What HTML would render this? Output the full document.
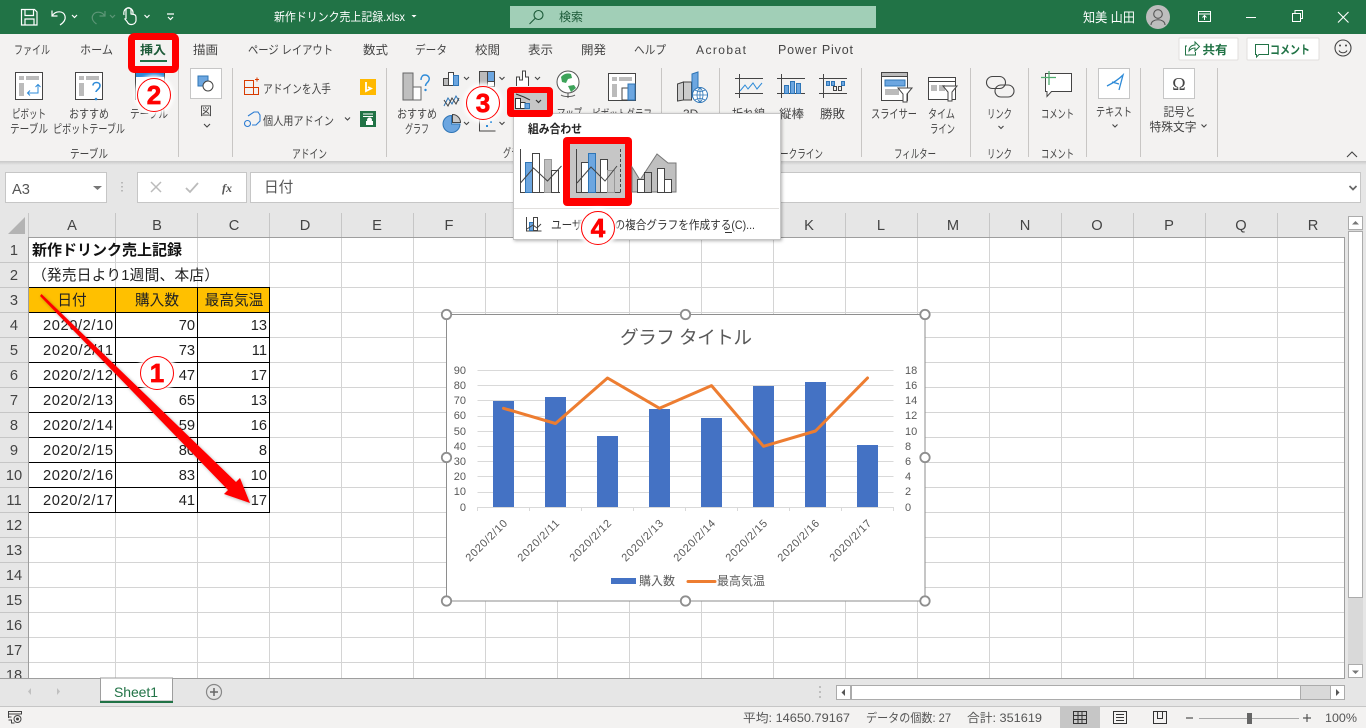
<!DOCTYPE html>
<html lang="ja"><head><meta charset="utf-8"><title>新作ドリンク売上記録.xlsx - Excel</title>
<style>
html,body{margin:0;padding:0;width:1366px;height:728px;overflow:hidden;background:#e6e6e6}
svg{display:block;font-family:"Liberation Sans","Noto Sans CJK JP",sans-serif}
text{font-size:12px;fill:#444}
.w{fill:#fff}
.c{font-size:14.67px;fill:#222}
.h{font-size:14.67px;fill:#444;text-anchor:middle}
.r{font-size:14.67px;fill:#222;text-anchor:end}
.a{font-size:11px;fill:#595959}
.e{text-anchor:end}
.m{text-anchor:middle}
.n{font-size:26px;font-weight:bold;fill:#f00;stroke:#f00;stroke-width:.7;text-anchor:middle;font-family:"Liberation Sans",sans-serif}
.ic{fill:none;stroke:#444;stroke-width:1}
.ch{fill:none;stroke:#444;stroke-width:1.1}
</style></head><body>
<svg width="1366" height="728" viewBox="0 0 1366 728" xmlns="http://www.w3.org/2000/svg">
<defs>
<linearGradient id="sh" x1="0" y1="0" x2="0" y2="1"><stop offset="0" stop-color="#c8c8c8"/><stop offset="1" stop-color="#e6e6e6"/></linearGradient>
<filter id="ds" x="-10%" y="-10%" width="120%" height="120%"><feDropShadow dx="1" dy="1" stdDeviation="1.5" flood-color="#000" flood-opacity=".3"/></filter>
<filter id="gl" x="-30%" y="-30%" width="160%" height="160%"><feGaussianBlur stdDeviation="1.5"/></filter>
</defs>
<!-- backgrounds -->
<rect width="1366" height="728" fill="#e6e6e6"/>
<rect width="1366" height="34" fill="#217346"/>
<rect y="34" width="1366" height="127" fill="#f3f2f1"/>
<rect y="161" width="1366" height="4" fill="url(#sh)"/>
<!-- title bar -->
<g fill="none" stroke="#fff" stroke-width="1.2">
<path d="M21.5 9.5h13l2.5 2.500v13h-15.500zM25 9.500v6h8.500v-6M25 25v-6h9v6"/>
<path d="M52 10.500v5.500h5.500M52.500 15.500c3-5 11-5 12.500.5 1 4-2 7-5 9"/>
<path d="M72 15l2.500 2.500 2.500-2.500"/>
<path d="M105 11v5h-5.500M104.500 15.500c-3-4.500-10-4.500-12 .5-1 3 1 6 4 8M110 15l2.500 2.500 2.500-2.500" stroke="#5d9677"/>
<path d="M126 19v-9c0-3 5-3 5 0v4l3 .500c2 .5 2 2 2 4v2c0 2-2 4-4 4h-1c-2 0-3-1-4-3l-2.500-3M124 15c-1-5 2-7 4.500-7s5 2 4.500 6"/>
<path d="M144.500 15l2.500 2.500 2.500-2.500"/>
<path d="M167 14h7M168 17l2.500 2.500 2.500-2.500"/>
</g>
<text x="274" y="21" class="w" textLength="131" lengthAdjust="spacingAndGlyphs">新作ドリンク売上記録.xlsx</text>
<path d="M411.500 15h5l-2.500 2.500z" fill="#fff"/>
<rect x="510" y="6" width="366" height="22" fill="#a1cfb7"/>
<g fill="none" stroke="#1c5a38" stroke-width="1.1"><circle cx="538.500" cy="15" r="4.500"/><path d="M535 18.500l-5.500 5.500"/></g>
<text x="559" y="21" style="fill:#1c5a38" textLength="24" lengthAdjust="spacingAndGlyphs">検索</text>
<text x="1083" y="22" class="w" style="font-size:13px" textLength="52" lengthAdjust="spacingAndGlyphs">知美 山田</text>
<circle cx="1158" cy="17" r="12" fill="#bdbdbd"/>
<g fill="none" stroke="#555" stroke-width="1.100"><circle cx="1158" cy="14" r="4.300"/><path d="M1151 25c0-7 14-7 14 0"/></g>
<g fill="none" stroke="#fff" stroke-width="1"><rect x="1198.500" y="11.500" width="12" height="10"/><path d="M1198.500 14h12M1204.500 20v-4M1202.500 17.500l2-2 2 2"/>
<path d="M1246 17.500h10"/><rect x="1292.500" y="13.500" width="8" height="8"/><path d="M1295 13v-2.500h7.500v8h-2"/><path d="M1338 12l10.500 10.500M1348.500 12l-10.500 10.500" stroke-width="1.100"/></g>
<!-- tabs -->
<g>
<text x="14" y="54" textLength="36" lengthAdjust="spacingAndGlyphs">ファイル</text>
<text x="80" y="54" textLength="33" lengthAdjust="spacingAndGlyphs">ホーム</text>
<text x="140" y="54" font-weight="bold" style="fill:#1e5c3a" textLength="26" lengthAdjust="spacingAndGlyphs">挿入</text>
<text x="193" y="54" textLength="25" lengthAdjust="spacingAndGlyphs">描画</text>
<text x="248" y="54" textLength="85" lengthAdjust="spacingAndGlyphs">ページ レイアウト</text>
<text x="363" y="54" textLength="25" lengthAdjust="spacingAndGlyphs">数式</text>
<text x="415" y="54" textLength="32" lengthAdjust="spacingAndGlyphs">データ</text>
<text x="475" y="54" textLength="25" lengthAdjust="spacingAndGlyphs">校閲</text>
<text x="528" y="54" textLength="25" lengthAdjust="spacingAndGlyphs">表示</text>
<text x="581" y="54" textLength="25" lengthAdjust="spacingAndGlyphs">開発</text>
<text x="634" y="54" textLength="32" lengthAdjust="spacingAndGlyphs">ヘルプ</text>
<text x="696" y="54" textLength="50" style="font-size:12px">Acrobat</text>
<text x="778" y="54" textLength="75" style="font-size:12.500px">Power Pivot</text>
</g>
<rect x="140" y="60" width="27" height="2" fill="#217346"/>
<rect x="1179" y="38" width="59" height="22" rx="1" fill="#fff" stroke="#e1dfdd"/>
<rect x="1247" y="38" width="72" height="22" rx="1" fill="#fff" stroke="#e1dfdd"/>
<g fill="none" stroke="#217346" stroke-width="1"><path d="M1187 46h-1.500v9h10v-3M1189 51c0-4 3-6 6-6v-3l4.500 4.500-4.500 4.500v-3c-3 0-4.500 1-6 3z"/><path d="M1255.500 44.500h13v10h-9.500l-2.500 2.500v-2.500h-1z"/></g>
<text x="1202.500" y="54" font-weight="bold" style="fill:#217346" textLength="25" lengthAdjust="spacingAndGlyphs">共有</text>
<text x="1270" y="54" font-weight="bold" style="fill:#217346" textLength="40" lengthAdjust="spacingAndGlyphs">コメント</text>
<g fill="none" stroke="#444" stroke-width="1.100"><circle cx="1343" cy="48" r="8"/><path d="M1339 50.500c1.500 3 6.500 3 8 0"/></g>
<circle cx="1340" cy="45.500" r="1" fill="#444"/><circle cx="1346" cy="45.500" r="1" fill="#444"/>
<!-- group separators -->
<path d="M178.500 68v89M232.500 68v89M386.500 68v89M661.500 68v89M719.500 68v89M861.500 68v89M970.500 68v89M1028.500 68v89M1086.500 68v89M1140.500 68v89M1217.500 68v89" stroke="#c8c6c4" fill="none"/>
<!-- pivot icons -->
<g class="ic">
<rect x="15.500" y="72.500" width="27" height="27" fill="#fff" stroke="#444"/>
<rect x="19" y="76" width="5" height="4" fill="#bbb" stroke="none"/><rect x="26" y="76" width="13" height="4" fill="#bbb" stroke="none"/><rect x="19" y="83" width="5" height="13" fill="#bbb" stroke="none"/>
<path d="M28 93h10v-8M35.500 87l2.500-2.500 2.500 2.500M30 90.500L27.500 93l2.500 2.500" stroke="#2e8bd8"/>
<rect x="75.500" y="72.500" width="27" height="27" fill="#fff" stroke="#444"/>
<rect x="79" y="76" width="5" height="4" fill="#bbb" stroke="none"/><rect x="86" y="76" width="13" height="4" fill="#bbb" stroke="none"/><rect x="79" y="83" width="5" height="13" fill="#bbb" stroke="none"/>
<path d="M96 92c0-2 4-3 4-6.500 0-4-7-4-7 0" stroke="#2e8bd8" stroke-width="1.600"/>
<path d="M135.500 100v-28h29v28" fill="#fff"/>
<rect x="136" y="72" width="28" height="5" fill="#2e8bd8" stroke="none"/>
</g>
<circle cx="96" cy="99" r="1.300" fill="#2e8bd8"/>
<text x="12" y="118" textLength="34" lengthAdjust="spacingAndGlyphs">ピボット</text>
<text x="10" y="133" textLength="38" lengthAdjust="spacingAndGlyphs">テーブル</text>
<text x="69" y="118" textLength="40" lengthAdjust="spacingAndGlyphs">おすすめ</text>
<text x="53" y="133" textLength="72" lengthAdjust="spacingAndGlyphs">ピボットテーブル</text>
<text x="130" y="118" textLength="38" lengthAdjust="spacingAndGlyphs">テーブル</text>
<text x="70" y="158" textLength="38" lengthAdjust="spacingAndGlyphs">テーブル</text>
<!-- pictures -->
<rect x="190.500" y="68.500" width="31" height="30" fill="#fff" stroke="#c6c6c6"/>
<rect x="198" y="76" width="10" height="10" fill="#6ca6e0" stroke="#2e75b6"/>
<circle cx="208" cy="86" r="5" fill="#fff" stroke="#444"/>
<text x="200" y="115">図</text>
<path class="ch" d="M204 124l3 3 3-3"/>
<!-- add-in -->
<g fill="none" stroke="#d83b01" stroke-width="1"><path d="M244.500 80.500h9v14h-9zM244.500 87.500h14v7h-5M253.500 80.500v14M255 79.500h4M257 77.500v4"/></g>
<text x="263" y="93" textLength="68" lengthAdjust="spacingAndGlyphs">アドインを入手</text>
<rect x="360" y="79" width="16" height="16" fill="#ffb900"/>
<path d="M366 82v9l5-2.500-3-1.500" fill="none" stroke="#fff" stroke-width="1.800"/>
<g fill="none" stroke="#2b7cd3" stroke-width="1.100"><path d="M248 116l6-4h4l2 3v6l-4 4h-4M244 122"/><circle cx="247.500" cy="123.500" r="3"/></g>
<text x="263" y="125" textLength="71" lengthAdjust="spacingAndGlyphs">個人用アドイン</text>
<path class="ch" d="M345 117.500l2.500 2.500 2.500-2.500"/>
<rect x="360" y="111" width="16" height="16" fill="#217346"/>
<path d="M363 114h10M363 116.500h10" stroke="#fff"/><circle cx="369.500" cy="120" r="2.500" fill="#fff"/><rect x="366" y="121" width="7" height="4" fill="#fff"/>
<text x="292" y="158" textLength="35" lengthAdjust="spacingAndGlyphs">アドイン</text>
<!-- chart group -->
<rect x="403" y="73" width="10" height="27" fill="#bfbfbf" stroke="#666"/><rect x="413" y="87" width="8" height="13" fill="#fff" stroke="#666"/>
<path d="M421 80c0-3 1.500-5 4-5s5 2 4 5-3.500 3-3.500 6" fill="none" stroke="#2e8bd8" stroke-width="1.400"/><circle cx="425.500" cy="90" r="1.200" fill="#2e8bd8"/>
<text x="397" y="118" textLength="40" lengthAdjust="spacingAndGlyphs">おすすめ</text>
<text x="405" y="133" textLength="24" lengthAdjust="spacingAndGlyphs">グラフ</text>
<!-- mini icons -->
<g stroke="#444" stroke-width="1">
<rect x="443.500" y="78.500" width="5" height="7" fill="#bbb"/><rect x="448.500" y="72.500" width="5" height="13" fill="#fff"/><rect x="453.500" y="75.500" width="5" height="10" fill="#6ca6e0" stroke="#2e75b6"/>
<rect x="479.500" y="71.500" width="15" height="15" fill="#fff"/><rect x="487.500" y="71.500" width="7" height="10" fill="#6ca6e0" stroke="#444"/><rect x="479.500" y="71.500" width="8" height="15" fill="#bbb"/>
<path d="M516.500 86v-9h3v3h3v-9h3v6h3v9" fill="#fff"/>
<path d="M444 106l4-8 4 6 4-8 3 5" fill="none" stroke="#2e75b6"/><path d="M444 100l4 6 4-8 4 6 3-6" fill="none"/>
<path d="M451.500 115.500a8.500 8.500 0 1 0 8.500 8.500h-8.500z" fill="#6ca6e0" stroke="#2e75b6"/><path d="M452.500 114.500v8h8a8 8 0 0 0-8-8z" fill="#ccc"/>
<path d="M479.500 118v13h16" fill="none"/>
</g>
<rect x="486" y="125" width="2" height="2" fill="#2e8bd8"/><rect x="490" y="121" width="2" height="2" fill="#2e8bd8"/>
<path class="ch" d="M464 77l2.500 2.500L469 77M499.500 77l2.500 2.500 2.500-2.500M535 77l2.500 2.500L540 77M464 122l2.500 2.500L469 122M499.500 122l2.500 2.500 2.500-2.500"/>
<text x="503" y="157" textLength="24" lengthAdjust="spacingAndGlyphs">グラフ</text>
<!-- map -->
<circle cx="568" cy="82" r="11" fill="#fff" stroke="#555"/>
<path d="M561 77c3-4 8-4 10-3l1 4-4 1-2 4-4-1zM568 86l6-1 2 3-5 4z" fill="#3ea35a"/>
<path d="M561 95c3 2 11 2 14 0M568 93v5" fill="none" stroke="#555"/>
<text x="557" y="117" textLength="25" lengthAdjust="spacingAndGlyphs">マップ</text>
<!-- pivot chart -->
<rect x="608.500" y="73.500" width="27" height="27" fill="#fff" stroke="#444"/>
<rect x="612" y="77" width="5" height="4" fill="#bbb"/><rect x="619" y="77" width="13" height="4" fill="#bbb"/><rect x="612" y="84" width="5" height="13" fill="#bbb"/>
<rect x="622" y="88" width="6" height="12" fill="#fff" stroke="#444"/><rect x="628" y="84" width="7" height="16" fill="#6ca6e0" stroke="#2e75b6"/>
<text x="592" y="118" textLength="60" lengthAdjust="spacingAndGlyphs">ピボットグラフ</text>
<!-- 3D map -->
<path d="M677.500 84l6-2v18l-6 1zM683.500 82l8 0v18h-8z" fill="#ccc" stroke="#444"/>
<path d="M692 74l6-2v25h-6z" fill="#6ca6e0" stroke="#2e75b6"/>
<circle cx="700" cy="95" r="7.500" fill="#fff" stroke="#2e75b6"/>
<path d="M692.500 95h15M700 87.500v15M695 90c3 2 7 2 10 0M695 100c3-2 7-2 10 0M700 87.500c-4 4-4 11 0 15M700 87.500c4 4 4 11 0 15" fill="none" stroke="#2e75b6" stroke-width=".8"/>
<text x="683" y="118">3D</text>
<!-- sparklines -->
<g fill="none" stroke="#444"><path d="M735 78.500h28M735 93.500h28M739.500 74v24M777 78.500h28M777 93.500h28M781.500 74v24M819 78.500h28M819 93.500h28M823.500 74v24"/>
<path d="M740 91l5-6 3 4 5-6 4 6 5-6" stroke="#2e8bd8"/>
<g fill="#6ca6e0" stroke="#2e75b6"><rect x="784.500" y="85.500" width="4" height="8"/><rect x="790.500" y="81.500" width="4" height="12"/><rect x="796.500" y="83.500" width="4" height="10"/><rect x="826.500" y="81.500" width="3" height="4"/><rect x="831.500" y="81.500" width="3" height="4"/><rect x="841.500" y="81.500" width="3" height="4"/></g>
<rect x="833.500" y="86.500" width="3" height="4"/><rect x="838.500" y="86.500" width="3" height="4"/></g>
<text x="732" y="118" textLength="33" lengthAdjust="spacingAndGlyphs">折れ線</text>
<text x="779" y="118" textLength="25" lengthAdjust="spacingAndGlyphs">縦棒</text>
<text x="820" y="118" textLength="25" lengthAdjust="spacingAndGlyphs">勝敗</text>
<text x="780" y="158" textLength="43" lengthAdjust="spacingAndGlyphs">ークライン</text>
<!-- filter -->
<rect x="881.500" y="72.500" width="26" height="28" fill="#fff" stroke="#444"/><rect x="881.500" y="72.500" width="26" height="4" fill="#bbb" stroke="#444"/>
<rect x="885" y="80" width="20" height="6" fill="#6ca6e0" stroke="#2e75b6"/><rect x="885" y="89" width="14" height="6" fill="#bbb"/>
<path d="M898 88h14l-5 6v8h-4v-8z" fill="#fff" stroke="#444"/>
<rect x="928.500" y="77.500" width="27" height="22" fill="#fff" stroke="#444"/><path d="M928.500 81.500h27" stroke="#444"/>
<rect x="931" y="85" width="6" height="6" fill="#bbb"/><rect x="939" y="85" width="6" height="6" fill="#bbb"/>
<path d="M943 86h14l-5 6v9h-4v-9z" fill="#fff" stroke="#444"/>
<text x="871" y="118" textLength="46" lengthAdjust="spacingAndGlyphs">スライサー</text>
<text x="928" y="118" textLength="27" lengthAdjust="spacingAndGlyphs">タイム</text>
<text x="930" y="133" textLength="25" lengthAdjust="spacingAndGlyphs">ライン</text>
<text x="894" y="158" textLength="42" lengthAdjust="spacingAndGlyphs">フィルター</text>
<!-- link -->
<g fill="none" stroke="#444" stroke-width="1.100"><rect x="986.500" y="76.500" width="19" height="12" rx="6"/><rect x="995" y="85" width="19" height="12" rx="6"/></g>
<text x="987" y="118" textLength="25" lengthAdjust="spacingAndGlyphs">リンク</text>
<path class="ch" d="M998.500 126l2.500 2.500 2.500-2.500"/>
<text x="987" y="158" textLength="25" lengthAdjust="spacingAndGlyphs">リンク</text>
<!-- comment -->
<path d="M1045.500 73.500h26v18h-20l-4.500 5v-5h-1.500z" fill="#fff" stroke="#444"/>
<path d="M1041 77.500h15M1049 71v14" stroke="#4eac6d" stroke-width="1.300"/>
<text x="1041" y="118" textLength="33" lengthAdjust="spacingAndGlyphs">コメント</text>
<text x="1041" y="158" textLength="33" lengthAdjust="spacingAndGlyphs">コメント</text>
<!-- text -->
<rect x="1098.500" y="68.500" width="31" height="30" fill="#fff" stroke="#c6c6c6"/>
<path d="M1107 86c6-3 12-7 16-11l-4 15M1112 82l7 2" fill="none" stroke="#2e8bd8" stroke-width="1.300"/>
<text x="1096" y="116" textLength="36" lengthAdjust="spacingAndGlyphs">テキスト</text>
<path class="ch" d="M1112.500 124.500l2.500 2.500 2.500-2.500"/>
<rect x="1163.500" y="68.500" width="31" height="30" fill="#fff" stroke="#c6c6c6"/>
<text x="1179" y="90" class="m" style="font-size:18px;font-family:'Liberation Serif',serif">Ω</text>
<text x="1163.500" y="116" textLength="32" lengthAdjust="spacingAndGlyphs">記号と</text>
<text x="1149.500" y="131" textLength="47" lengthAdjust="spacingAndGlyphs">特殊文字</text>
<path class="ch" d="M1201.500 124.500l2.500 2.500 2.500-2.500"/>
<path d="M1347 157l5-5 5 5" fill="none" stroke="#444" stroke-width="1.100"/>
<!-- formula bar -->
<rect x="5.500" y="172.500" width="101" height="30" fill="#fff" stroke="#c6c6c6"/>
<text x="12" y="194" style="font-size:14.670px;fill:#555">A3</text>
<path d="M93 186h9l-4.500 4z" fill="#777"/>
<path d="M122 182v1.500M122 186v1.500M122 190v1.500" stroke="#aaa" stroke-width="1.500"/>
<rect x="137.500" y="172.500" width="109" height="30" fill="#fff" stroke="#c6c6c6"/>
<path d="M151 182l10 10M161 182l-10 10" stroke="#bbb" stroke-width="1.500"/>
<path d="M186 188l4 4 8-9" stroke="#bbb" stroke-width="1.800" fill="none"/>
<text x="222" y="192" style="font-size:12px;font-style:italic;font-weight:bold;fill:#555;font-family:'Liberation Serif',serif">fx</text>
<rect x="250.500" y="172.500" width="1110" height="30" fill="#fff" stroke="#c6c6c6"/>
<text x="264" y="192" style="font-size:14.670px;fill:#555">日付</text>
<path d="M1349.500 186l3.500 3.500 3.500-3.500" fill="none" stroke="#666" stroke-width="1.700"/>
<!-- sheet -->
<rect x="29" y="238" width="1316" height="440" fill="#fff"/>
<g stroke="#d4d4d4" fill="none">
<path d="M115.500 238v440M197.500 238v440M269.500 238v440M341.500 238v440M413.500 238v440M485.500 238v440M557.500 238v440M629.500 238v440M701.500 238v440M773.500 238v440M845.500 238v440M917.500 238v440M989.500 238v440M1061.500 238v440M1133.500 238v440M1205.500 238v440M1277.500 238v440"/>
<path d="M29 262.500h1316M29 287.500h1316M29 312.500h1316M29 337.500h1316M29 362.500h1316M29 387.500h1316M29 412.500h1316M29 437.500h1316M29 462.500h1316M29 487.500h1316M29 512.500h1316M29 537.500h1316M29 562.500h1316M29 587.500h1316M29 612.500h1316M29 637.500h1316M29 662.500h1316"/>
</g>
<!-- headers -->
<rect x="0" y="212" width="1346" height="25" fill="#e6e6e6"/>
<rect x="0" y="212" width="28" height="466" fill="#e6e6e6"/>
<path d="M25 217v17H8z" fill="#b3b3b3"/>
<g stroke="#c6c6c6" fill="none">
<path d="M28.500 213v24M115.500 213v24M197.500 213v24M269.500 213v24M341.500 213v24M413.500 213v24M485.500 213v24M557.500 213v24M629.500 213v24M701.500 213v24M773.500 213v24M845.500 213v24M917.500 213v24M989.500 213v24M1061.500 213v24M1133.500 213v24M1205.500 213v24M1277.500 213v24"/>
<path d="M0 262.500h28M0 287.500h28M0 312.500h28M0 337.500h28M0 362.500h28M0 387.500h28M0 412.500h28M0 437.500h28M0 462.500h28M0 487.500h28M0 512.500h28M0 537.500h28M0 562.500h28M0 587.500h28M0 612.500h28M0 637.500h28M0 662.500h28"/>
</g>
<path d="M29 237.500h1316M28.500 237v441M1344.500 237v441" stroke="#9e9e9e" fill="none"/>
<g>
<text class="h" x="72" y="230">A</text><text class="h" x="157" y="230">B</text><text class="h" x="234" y="230">C</text><text class="h" x="305" y="230">D</text><text class="h" x="377" y="230">E</text><text class="h" x="449" y="230">F</text><text class="h" x="521" y="230">G</text><text class="h" x="593" y="230">H</text><text class="h" x="665" y="230">I</text><text class="h" x="737" y="230">J</text><text class="h" x="809" y="230">K</text><text class="h" x="881" y="230">L</text><text class="h" x="953" y="230">M</text><text class="h" x="1025" y="230">N</text><text class="h" x="1097" y="230">O</text><text class="h" x="1169" y="230">P</text><text class="h" x="1241" y="230">Q</text><text class="h" x="1313" y="230">R</text>
<text class="h" x="14" y="255">1</text><text class="h" x="14" y="280">2</text><text class="h" x="14" y="305">3</text><text class="h" x="14" y="330">4</text><text class="h" x="14" y="355">5</text><text class="h" x="14" y="380">6</text><text class="h" x="14" y="405">7</text><text class="h" x="14" y="430">8</text><text class="h" x="14" y="455">9</text><text class="h" x="14" y="480">10</text><text class="h" x="14" y="505">11</text><text class="h" x="14" y="530">12</text><text class="h" x="14" y="555">13</text><text class="h" x="14" y="580">14</text><text class="h" x="14" y="605">15</text><text class="h" x="14" y="630">16</text><text class="h" x="14" y="655">17</text><text class="h" x="14" y="680">18</text>
</g>
<rect x="0" y="678" width="1366" height="29" fill="#e6e6e6"/>
<!-- cells -->
<rect x="29" y="288" width="241" height="25" fill="#ffc000"/>
<path d="M29 287.500h241M29 312.500h241M29 337.500h241M29 362.500h241M29 387.500h241M29 412.500h241M29 437.500h241M29 462.500h241M29 487.500h241M29 512.500h241M115.500 287v226M197.500 287v226M269.500 287v226" stroke="#000" fill="none"/>
<text class="c" x="32" y="255" font-weight="bold" style="font-size:15px;fill:#111">新作ドリンク売上記録</text>
<text class="c" x="32" y="280" textLength="187">（発売日より1週間、本店）</text>
<text class="h" x="72" y="305" style="fill:#222">日付</text><text class="h" x="157" y="305" style="fill:#222">購入数</text><text class="h" x="234" y="305" style="fill:#222">最高気温</text>
<g>
<text class="c" x="43" y="330" textLength="70">2020/2/10</text><text class="r" x="195" y="330">70</text><text class="r" x="267" y="330">13</text>
<text class="c" x="43" y="355" textLength="70">2020/2/11</text><text class="r" x="195" y="355">73</text><text class="r" x="267" y="355">11</text>
<text class="c" x="43" y="380" textLength="70">2020/2/12</text><text class="r" x="195" y="380">47</text><text class="r" x="267" y="380">17</text>
<text class="c" x="43" y="405" textLength="70">2020/2/13</text><text class="r" x="195" y="405">65</text><text class="r" x="267" y="405">13</text>
<text class="c" x="43" y="430" textLength="70">2020/2/14</text><text class="r" x="195" y="430">59</text><text class="r" x="267" y="430">16</text>
<text class="c" x="43" y="455" textLength="70">2020/2/15</text><text class="r" x="195" y="455">80</text><text class="r" x="267" y="455">8</text>
<text class="c" x="43" y="480" textLength="70">2020/2/16</text><text class="r" x="195" y="480">83</text><text class="r" x="267" y="480">10</text>
<text class="c" x="43" y="505" textLength="70">2020/2/17</text><text class="r" x="195" y="505">41</text><text class="r" x="267" y="505">17</text>
</g>
<!-- chart -->
<rect x="446.500" y="314.500" width="478.500" height="286.500" fill="#fff" stroke="#8e8e8e"/>
<text x="620" y="344" style="font-size:18.670px;fill:#595959" textLength="132">グラフ タイトル</text>
<path d="M477.500 370.500h416M477.500 385.500h416M477.500 400.500h416M477.500 416.500h416M477.500 431.500h416M477.500 446.500h416M477.500 461.500h416M477.500 476.500h416M477.500 492.500h416" stroke="#d9d9d9" fill="none"/>
<g fill="#4472c4">
<rect x="493" y="401" width="21" height="106"/><rect x="545" y="397" width="21" height="110"/><rect x="597" y="436" width="21" height="71"/><rect x="649" y="409" width="21" height="98"/><rect x="701" y="418" width="21" height="89"/><rect x="753" y="386" width="21" height="121"/><rect x="805" y="382" width="21" height="125"/><rect x="857" y="445" width="21" height="62"/>
</g>
<path d="M477.500 507.500h416M477.500 507v4M529.500 507v4M581.500 507v4M633.500 507v4M685.500 507v4M737.500 507v4M789.500 507v4M841.500 507v4M893.500 507v4" stroke="#d9d9d9" fill="none"/>
<path d="M503.500 408.300L555.500 423.500 607.500 378 659.500 408.300 711.500 385.600 763.500 446.300 815.500 431 867.500 378" fill="none" stroke="#ed7d31" stroke-width="3" stroke-linecap="round" stroke-linejoin="round"/>
<g class="a">
<text class="a e" x="466" y="374">90</text><text class="a e" x="466" y="389">80</text><text class="a e" x="466" y="404">70</text><text class="a e" x="466" y="419">60</text><text class="a e" x="466" y="435">50</text><text class="a e" x="466" y="450">40</text><text class="a e" x="466" y="465">30</text><text class="a e" x="466" y="480">20</text><text class="a e" x="466" y="495">10</text><text class="a e" x="466" y="511">0</text>
<text class="a" x="905" y="374">18</text><text class="a" x="905" y="389">16</text><text class="a" x="905" y="404">14</text><text class="a" x="905" y="419">12</text><text class="a" x="905" y="435">10</text><text class="a" x="905" y="450">8</text><text class="a" x="905" y="465">6</text><text class="a" x="905" y="480">4</text><text class="a" x="905" y="495">2</text><text class="a" x="905" y="511">0</text>
<text class="a e" transform="rotate(-45 508 524)" x="508" y="524" textLength="54">2020/2/10</text>
<text class="a e" transform="rotate(-45 560 524)" x="560" y="524" textLength="54">2020/2/11</text>
<text class="a e" transform="rotate(-45 612 524)" x="612" y="524" textLength="54">2020/2/12</text>
<text class="a e" transform="rotate(-45 664 524)" x="664" y="524" textLength="54">2020/2/13</text>
<text class="a e" transform="rotate(-45 716 524)" x="716" y="524" textLength="54">2020/2/14</text>
<text class="a e" transform="rotate(-45 768 524)" x="768" y="524" textLength="54">2020/2/15</text>
<text class="a e" transform="rotate(-45 820 524)" x="820" y="524" textLength="54">2020/2/16</text>
<text class="a e" transform="rotate(-45 872 524)" x="872" y="524" textLength="54">2020/2/17</text>
</g>
<rect x="611" y="578" width="25" height="6" fill="#4472c4"/>
<text x="639" y="585" style="fill:#595959;font-size:12px">購入数</text>
<path d="M688 581.500h27" stroke="#ed7d31" stroke-width="3" stroke-linecap="round"/>
<text x="717" y="585" style="fill:#595959;font-size:12px">最高気温</text>
<g fill="#fff" stroke="#8e8e8e" stroke-width="1.800">
<circle cx="446.500" cy="314.500" r="4.700"/><circle cx="685.500" cy="314.500" r="4.700"/><circle cx="925" cy="314.500" r="4.700"/><circle cx="446.500" cy="457.500" r="4.700"/><circle cx="925" cy="457.500" r="4.700"/><circle cx="446.500" cy="601" r="4.700"/><circle cx="685.500" cy="601" r="4.700"/><circle cx="925" cy="601" r="4.700"/>
</g>
<!-- vertical scrollbar -->
<rect x="1348" y="216" width="15" height="462" fill="#d9d9d9"/>
<rect x="1348.500" y="216.500" width="14" height="13" fill="#fff" stroke="#ababab"/>
<path d="M1352 224.500h7l-3.500-3.500z" fill="#777"/>
<rect x="1348.500" y="231.500" width="14" height="366" fill="#fff" stroke="#ababab"/>
<rect x="1348.500" y="664.500" width="14" height="13" fill="#fff" stroke="#ababab"/>
<path d="M1352 670.500h7l-3.500 3.500z" fill="#777"/>
<!-- sheet tabs -->
<path d="M0 678.500h1345" stroke="#9e9e9e"/>
<path d="M31 688l-3 3.500 3 3.500zM57 688l3 3.500-3 3.500z" fill="#c0c0c0"/>
<rect x="100.500" y="678" width="72" height="23" fill="#fff" stroke="#9e9e9e"/>
<rect x="100" y="701" width="73" height="2" fill="#217346"/>
<text x="114" y="697" style="font-size:14px;fill:#217346" textLength="44">Sheet1</text>
<circle cx="214" cy="692" r="7.500" fill="none" stroke="#888" stroke-width="1.200"/><path d="M214 688v8M210 692h8" stroke="#666" stroke-width="1.500"/>
<path d="M820 686v2M820 691v2M820 696v2" stroke="#b0b0b0" stroke-width="1.500"/>
<rect x="836.500" y="685.500" width="508" height="14" fill="#d9d9d9" stroke="#ababab"/>
<rect x="836.500" y="685.500" width="14" height="14" fill="#fff" stroke="#ababab"/>
<path d="M845 689v7l-3.500-3.500z" fill="#555"/>
<rect x="851.500" y="685.500" width="449" height="14" fill="#fff" stroke="#ababab"/>
<rect x="1330.500" y="685.500" width="14" height="14" fill="#fff" stroke="#ababab"/>
<path d="M1336 689v7l3.500-3.500z" fill="#555"/>
<!-- status bar -->
<rect y="706" width="1366" height="22" fill="#f3f2f1"/>
<path d="M0 706.500h1366" stroke="#c6c6c6"/>
<g fill="none" stroke="#444"><path d="M8.500 718v-6.500h13v3M8.500 714h13M8.500 717h3M8.500 720h3v3h3"/><circle cx="17.500" cy="719" r="3.500"/></g>
<circle cx="17.500" cy="719" r="1.500" fill="#444"/>
<text x="743" y="722" textLength="107" lengthAdjust="spacingAndGlyphs" style="fill:#555">平均: 14650.79167</text>
<text x="866" y="722" textLength="85" lengthAdjust="spacingAndGlyphs" style="fill:#555">データの個数: 27</text>
<text x="967" y="722" textLength="75" lengthAdjust="spacingAndGlyphs" style="fill:#555">合計: 351619</text>
<rect x="1060" y="707" width="40" height="21" fill="#c6c6c6"/>
<g fill="none" stroke="#333"><path d="M1073.500 711.500h13v12h-13zM1078 711.500v12M1082 711.500v12M1073.500 715.500h13M1073.500 719.500h13"/>
<path d="M1113.500 711.500h13v12h-13zM1116 714.500h8M1116 717.500h8M1116 720.500h8"/>
<path d="M1153.500 711.500h13v12h-13zM1157.500 711.500v7h5v-7"/></g>
<path d="M1186 718h7M1303 718h8M1307 714v8" stroke="#555" stroke-width="1.200"/>
<path d="M1199 718.500h100" stroke="#a8a8a8"/><rect x="1247" y="713" width="5" height="11" fill="#666"/>
<text x="1325" y="722" textLength="32" lengthAdjust="spacingAndGlyphs" style="fill:#555">100%</text>
<!-- arrow -->
<polygon points="40,296 41.500,294 236,482 240,478 250,503 224,494 228,490" fill="#f00" filter="url(#ds)"/>
<!-- dropdown -->
<rect x="513.500" y="113.500" width="267" height="126" fill="#fff" stroke="#c6c6c6" filter="url(#ds)"/>
<text x="528" y="133" font-weight="bold" style="fill:#262626" textLength="54" lengthAdjust="spacingAndGlyphs">組み合わせ</text>
<g stroke="#444" fill="none">
<path d="M520.500 149v43.500H560"/>
<rect x="525.500" y="162.500" width="7" height="30" fill="#6ca6e0" stroke="#2e75b6"/><rect x="532.500" y="153.500" width="7" height="39" fill="#fff"/><rect x="544.500" y="159.500" width="7" height="33" fill="#bfbfbf" stroke="#999"/><rect x="551.500" y="170.500" width="7" height="22" fill="#fff"/>
<path d="M520.500 183l13-15 14 13 14-15"/>
</g>
<rect x="563" y="137" width="69" height="69" rx="4" fill="#f00"/>
<rect x="570" y="144" width="55" height="54" fill="#c6c6c6"/>
<g stroke="#444" fill="none">
<path d="M576.500 149v43.500h44"/><path d="M620.500 149v43" stroke-dasharray="3 2"/>
<rect x="581.500" y="162.500" width="7" height="30" fill="#fff"/><rect x="588.500" y="153.500" width="7" height="39" fill="#6ca6e0" stroke="#2e75b6"/><rect x="600.500" y="159.500" width="7" height="33" fill="#fff"/><rect x="607.500" y="170.500" width="7" height="22" fill="#c6c6c6" stroke="#999"/>
<path d="M577 183l14-16 14 14 12-15"/>
<path d="M632 167l8 13 17-26 11 9h8v29h-44z" fill="#bfbfbf" stroke="#777"/>
<rect x="637.500" y="179.500" width="7" height="13" fill="#fff"/><rect x="644.500" y="172.500" width="7" height="20" fill="#bfbfbf"/><rect x="657.500" y="168.500" width="7" height="24" fill="#fff"/><rect x="664.500" y="179.500" width="7" height="13" fill="#fff"/>
</g>
<path d="M514 208.500h265" stroke="#e1dfdd"/>
<g fill="none" stroke="#444"><path d="M526.500 217v14h15"/><rect x="529.500" y="222.500" width="4" height="8" fill="#6ca6e0" stroke="#2e75b6"/><rect x="533.500" y="217.500" width="4" height="13" fill="#fff"/><path d="M527 229l6-4 4 3 4-4"/></g>
<text x="551" y="229" textLength="204" lengthAdjust="spacingAndGlyphs" style="fill:#333">ユーザー設定の複合グラフを作成する(C)...</text>
<path d="M725 232.500h7" stroke="#333"/>
<!-- combo button highlight -->
<rect x="507" y="87" width="46" height="30" rx="4" fill="#f00"/>
<rect x="514" y="93" width="33" height="17" fill="#c6c6c6"/>
<g stroke="#333" fill="none"><path d="M516 94l8 3 6 3"/><rect x="515.500" y="98.500" width="5" height="10" fill="#fff"/><rect x="520.500" y="102.500" width="4.500" height="6" fill="#fff"/><rect x="525" y="103.500" width="4.500" height="5" fill="#6ca6e0" stroke="#2e75b6"/><path d="M536 100l2.500 2.500 2.500-2.500" stroke-width="1.200"/></g>
<!-- insert tab highlight -->
<rect x="131.500" y="36.500" width="44" height="33" rx="3" fill="none" stroke="#f00" stroke-width="7"/>
<!-- numbered badges -->
<g>
<circle cx="157" cy="373" r="20" fill="#fff" opacity=".9" filter="url(#gl)"/><circle cx="157" cy="373" r="17" fill="#fff"/><circle cx="157" cy="373" r="16.500" fill="none" stroke="#f00"/><text class="n" x="157" y="382">1</text>
<circle cx="154" cy="95" r="20" fill="#fff" opacity=".9" filter="url(#gl)"/><circle cx="154" cy="95" r="17" fill="#fff"/><circle cx="154" cy="95" r="16.500" fill="none" stroke="#f00"/><text class="n" x="154" y="104">2</text>
<circle cx="483" cy="103" r="20" fill="#fff" opacity=".9" filter="url(#gl)"/><circle cx="483" cy="103" r="17" fill="#fff"/><circle cx="483" cy="103" r="16.500" fill="none" stroke="#f00"/><text class="n" x="483" y="112">3</text>
<circle cx="598" cy="228" r="20" fill="#fff" opacity=".9" filter="url(#gl)"/><circle cx="598" cy="228" r="17" fill="#fff"/><circle cx="598" cy="228" r="16.500" fill="none" stroke="#f00"/><text class="n" x="598" y="237">4</text>
</g>
</svg>
</body></html>
